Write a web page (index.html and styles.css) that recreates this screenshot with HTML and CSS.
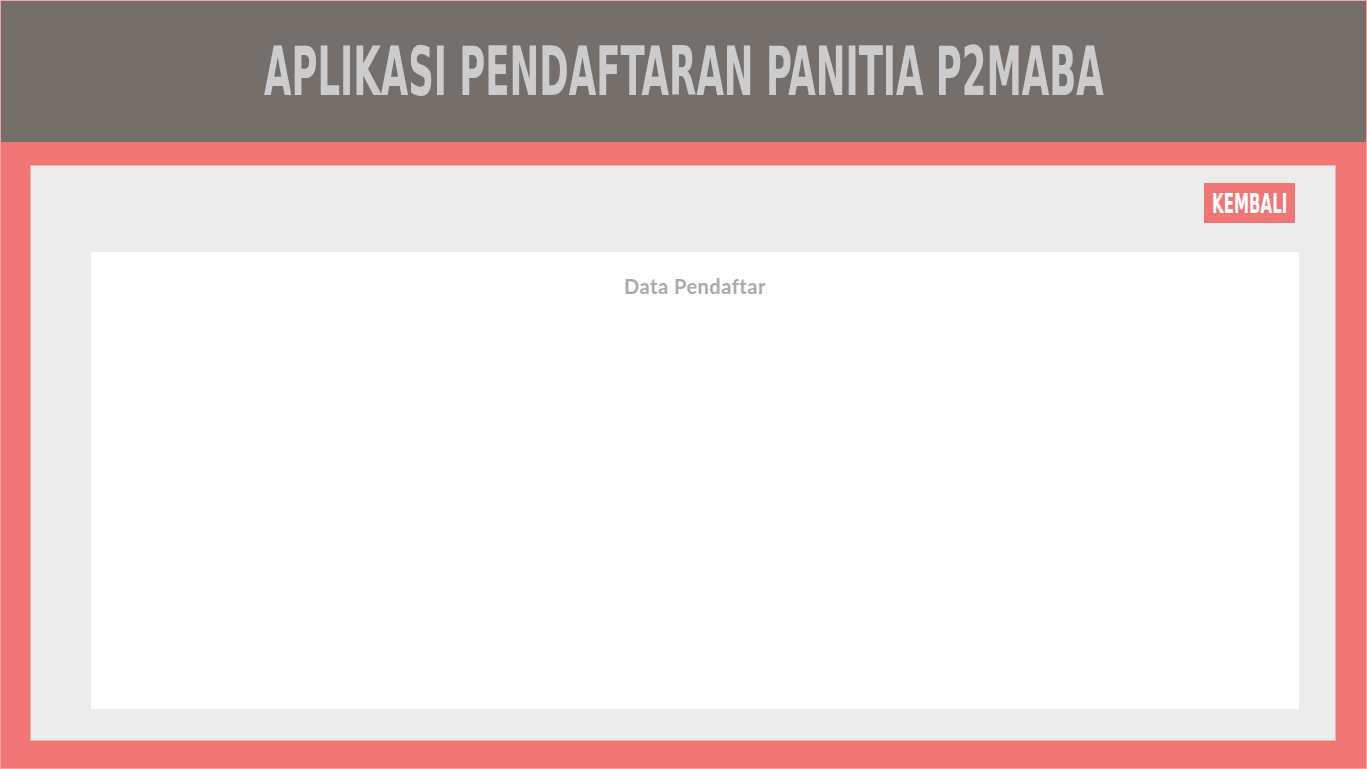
FILE: index.html
```html
<!DOCTYPE html>
<html lang="id">
<head>
<meta charset="utf-8">
<title>Aplikasi Pendaftaran Panitia P2MABA</title>
<link rel="stylesheet" href="styles.css">
</head>
<body>
<div class="page">
  <header class="header">
    <h1 class="title"><span class="title-text">APLIKASI PENDAFTARAN PANITIA P2MABA</span></h1>
  </header>
  <main class="panel">
    <div class="actions">
      <a class="btn-back" href="#"><span class="btn-text">KEMBALI</span></a>
    </div>
    <section class="card">
      <h2 class="card-title">Data Pendaftar</h2>
    </section>
  </main>
</div>
</body>
</html>
```
FILE: styles.css
```css
html, body {
  margin: 0;
  padding: 0;
}
body {
  width: 1367px;
  height: 769px;
  overflow: hidden;
  background: #f07676;
}
.page {
  box-sizing: border-box;
  width: 1367px;
  height: 769px;
  border: 1px solid #f4a2a2;
  background: #f07676;
  display: flex;
  flex-direction: column;
}
.header {
  height: 141px;
  background: #746f6b;
  display: flex;
  align-items: center;
  justify-content: center;
  flex-shrink: 0;
  overflow: visible;
}
.title {
  margin: 0;
  font-family: "DejaVu Sans Condensed", "Liberation Sans Narrow", sans-serif;
  font-weight: bold;
  font-size: 68px;
  line-height: 1;
  color: #cccccc;
  white-space: nowrap;
  flex-shrink: 0;
}
.title-text {
  display: inline-block;
  transform: scaleX(0.58);
}
.panel {
  box-sizing: border-box;
  margin: 23px 30px 27px 29px;
  flex: 1;
  background: #ececec;
  border: 1px solid #f3b3b3;
  display: flex;
  flex-direction: column;
  padding-top: 17px;
}
.actions {
  display: flex;
  justify-content: flex-end;
  padding-right: 40px;
}
.btn-back {
  width: 91px;
  height: 40px;
  background: #f07676;
  display: flex;
  align-items: center;
  justify-content: center;
  text-decoration: none;
  color: #ffffff;
  font-family: "DejaVu Sans Condensed", "Liberation Sans Narrow", sans-serif;
  font-weight: bold;
  font-size: 27px;
  line-height: 1;
  white-space: nowrap;
}
.btn-text {
  display: inline-block;
  transform: scaleX(0.62);
}
.card {
  margin: 29px 36px 31px 60px;
  flex: 1;
  background: #ffffff;
  padding-top: 22px;
}
.card-title {
  margin: 0;
  text-align: center;
  font-family: Lato, "Open Sans", sans-serif;
  font-weight: bold;
  font-size: 20px;
  line-height: 24px;
  letter-spacing: 0.5px;
  color: #aaaaaa;
}
```
